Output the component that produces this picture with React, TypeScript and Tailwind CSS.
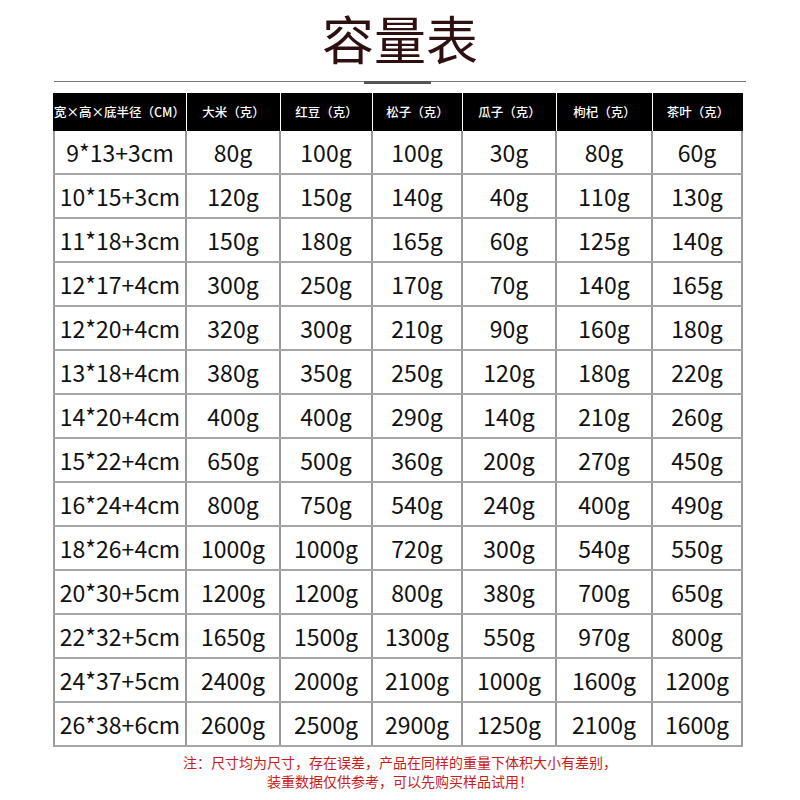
const headers = ["宽×高×底半径（CM）", "大米（克）", "红豆（克）", "松子（克）", "瓜子（克）", "枸杞（克）", "茶叶（克）"];

const rows: string[][] = [
  ["9*13+3cm", "80g", "100g", "100g", "30g", "80g", "60g"],
  ["10*15+3cm", "120g", "150g", "140g", "40g", "110g", "130g"],
  ["11*18+3cm", "150g", "180g", "165g", "60g", "125g", "140g"],
  ["12*17+4cm", "300g", "250g", "170g", "70g", "140g", "165g"],
  ["12*20+4cm", "320g", "300g", "210g", "90g", "160g", "180g"],
  ["13*18+4cm", "380g", "350g", "250g", "120g", "180g", "220g"],
  ["14*20+4cm", "400g", "400g", "290g", "140g", "210g", "260g"],
  ["15*22+4cm", "650g", "500g", "360g", "200g", "270g", "450g"],
  ["16*24+4cm", "800g", "750g", "540g", "240g", "400g", "490g"],
  ["18*26+4cm", "1000g", "1000g", "720g", "300g", "540g", "550g"],
  ["20*30+5cm", "1200g", "1200g", "800g", "380g", "700g", "650g"],
  ["22*32+5cm", "1650g", "1500g", "1300g", "550g", "970g", "800g"],
  ["24*37+5cm", "2400g", "2000g", "2100g", "1000g", "1600g", "1200g"],
  ["26*38+6cm", "2600g", "2500g", "2900g", "1250g", "2100g", "1600g"],
];

const cols = "grid grid-cols-[134px_94px_92px_90px_94px_96px_90px]";

export default function App() {
  return (
    <div
      className="h-[800px] w-[800px] bg-white"
      style={{ fontFamily: '"Noto Sans CJK SC", "Noto Sans", sans-serif' }}
    >
      <h1 className="pt-[12px] text-center text-[52px] leading-[52px] text-[#2e1010]">容量表</h1>

      <div className="mx-[54px] mt-[17px] h-px bg-[#777]">
        <div className="ml-[310px] h-[3px] w-[67px] bg-[#555]" />
      </div>

      <div className="mx-[53px] mt-[11px] w-[690px]">
        <div className={`${cols} h-[38px] bg-black`}>
          {headers.map((h, i) => (
            <div
              key={h}
              className={`flex items-center justify-center text-[12.5px] font-medium text-white ${
                i < headers.length - 1 ? "border-r border-white" : ""
              }`}
            >
              {h}
            </div>
          ))}
        </div>

        {rows.map((r) => (
          <div key={r[0]} className={`${cols} h-[44px] border-b-2 border-[#a6a6a6]`}>
            {r.map((c, i) => (
              <div
                key={i}
                className={`flex items-center justify-center border-r-2 border-[#999] pt-[1px] text-[23px] leading-none text-[#111] ${
                  i === 0 ? "border-l-2" : ""
                }`}
              >
                {c}
              </div>
            ))}
          </div>
        ))}
      </div>

      <div className="mt-[6px] text-center text-[14px] leading-[19px] text-[#cc1a1a]">
        <p>注：尺寸均为尺寸，存在误差，产品在同样的重量下体积大小有差别，</p>
        <p>装重数据仅供参考，可以先购买样品试用！</p>
      </div>
    </div>
  );
}
